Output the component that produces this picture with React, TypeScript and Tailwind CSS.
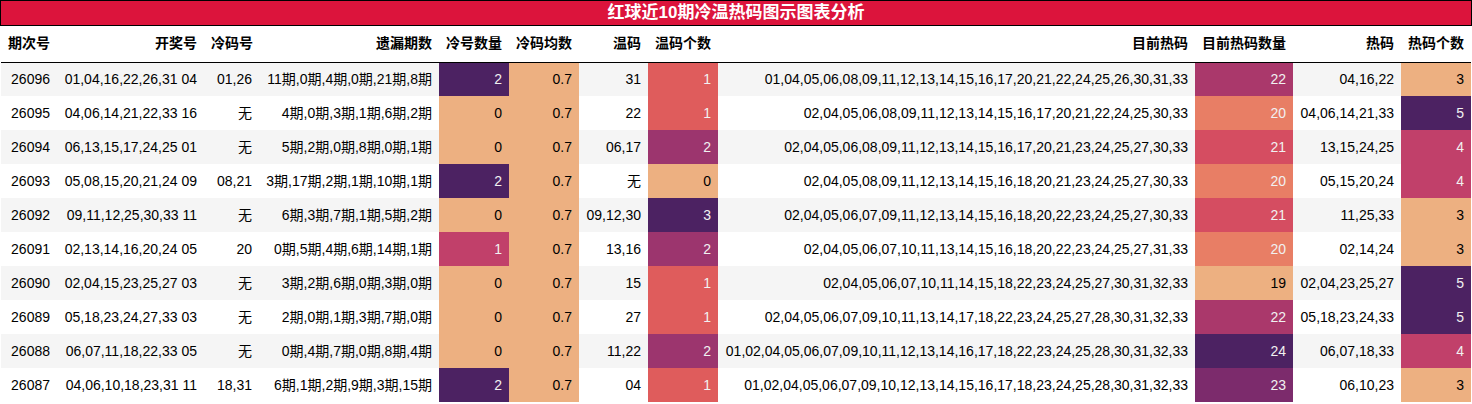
type Row = {
  issue: string;
  draw: string;
  cold: string;
  miss: string;
  coldCount: number;
  coldAvg: string;
  warm: string;
  warmCount: number;
  hotNow: string;
  hotNowCount: number;
  hot: string;
  hotCount: number;
};

const rows: Row[] = [
  { issue: '26096', draw: '01,04,16,22,26,31 04', cold: '01,26', miss: '11期,0期,4期,0期,21期,8期', coldCount: 2, coldAvg: '0.7', warm: '31', warmCount: 1, hotNow: '01,04,05,06,08,09,11,12,13,14,15,16,17,20,21,22,24,25,26,30,31,33', hotNowCount: 22, hot: '04,16,22', hotCount: 3 },
  { issue: '26095', draw: '04,06,14,21,22,33 16', cold: '无', miss: '4期,0期,3期,1期,6期,2期', coldCount: 0, coldAvg: '0.7', warm: '22', warmCount: 1, hotNow: '02,04,05,06,08,09,11,12,13,14,15,16,17,20,21,22,24,25,30,33', hotNowCount: 20, hot: '04,06,14,21,33', hotCount: 5 },
  { issue: '26094', draw: '06,13,15,17,24,25 01', cold: '无', miss: '5期,2期,0期,8期,0期,1期', coldCount: 0, coldAvg: '0.7', warm: '06,17', warmCount: 2, hotNow: '02,04,05,06,08,09,11,12,13,14,15,16,17,20,21,23,24,25,27,30,33', hotNowCount: 21, hot: '13,15,24,25', hotCount: 4 },
  { issue: '26093', draw: '05,08,15,20,21,24 09', cold: '08,21', miss: '3期,17期,2期,1期,10期,1期', coldCount: 2, coldAvg: '0.7', warm: '无', warmCount: 0, hotNow: '02,04,05,08,09,11,12,13,14,15,16,18,20,21,23,24,25,27,30,33', hotNowCount: 20, hot: '05,15,20,24', hotCount: 4 },
  { issue: '26092', draw: '09,11,12,25,30,33 11', cold: '无', miss: '6期,3期,7期,1期,5期,2期', coldCount: 0, coldAvg: '0.7', warm: '09,12,30', warmCount: 3, hotNow: '02,04,05,06,07,09,11,12,13,14,15,16,18,20,22,23,24,25,27,30,33', hotNowCount: 21, hot: '11,25,33', hotCount: 3 },
  { issue: '26091', draw: '02,13,14,16,20,24 05', cold: '20', miss: '0期,5期,4期,6期,14期,1期', coldCount: 1, coldAvg: '0.7', warm: '13,16', warmCount: 2, hotNow: '02,04,05,06,07,10,11,13,14,15,16,18,20,22,23,24,25,27,31,33', hotNowCount: 20, hot: '02,14,24', hotCount: 3 },
  { issue: '26090', draw: '02,04,15,23,25,27 03', cold: '无', miss: '3期,2期,6期,0期,3期,0期', coldCount: 0, coldAvg: '0.7', warm: '15', warmCount: 1, hotNow: '02,04,05,06,07,10,11,14,15,18,22,23,24,25,27,30,31,32,33', hotNowCount: 19, hot: '02,04,23,25,27', hotCount: 5 },
  { issue: '26089', draw: '05,18,23,24,27,33 03', cold: '无', miss: '2期,0期,1期,3期,7期,0期', coldCount: 0, coldAvg: '0.7', warm: '27', warmCount: 1, hotNow: '02,04,05,06,07,09,10,11,13,14,17,18,22,23,24,25,27,28,30,31,32,33', hotNowCount: 22, hot: '05,18,23,24,33', hotCount: 5 },
  { issue: '26088', draw: '06,07,11,18,22,33 05', cold: '无', miss: '0期,4期,7期,0期,8期,4期', coldCount: 0, coldAvg: '0.7', warm: '11,22', warmCount: 2, hotNow: '01,02,04,05,06,07,09,10,11,12,13,14,16,17,18,22,23,24,25,28,30,31,32,33', hotNowCount: 24, hot: '06,07,18,33', hotCount: 4 },
  { issue: '26087', draw: '04,06,10,18,23,31 11', cold: '18,31', miss: '6期,1期,2期,9期,3期,15期', coldCount: 2, coldAvg: '0.7', warm: '04', warmCount: 1, hotNow: '01,02,04,05,06,07,09,10,12,13,14,15,16,17,18,23,24,25,28,30,31,32,33', hotNowCount: 23, hot: '06,10,23', hotCount: 3 },
];

// gradient cells, one class per value (flare colour map)
const coldCountBg: Record<number, string> = {
  0: 'bg-[#edb081] text-black',
  1: 'bg-[#c1406a] text-[#f1f1f1]',
  2: 'bg-[#4c2262] text-[#f1f1f1]',
};
const warmCountBg: Record<number, string> = {
  0: 'bg-[#edb081] text-black',
  1: 'bg-[#df5c5c] text-[#f1f1f1]',
  2: 'bg-[#9c356e] text-[#f1f1f1]',
  3: 'bg-[#4c2262] text-[#f1f1f1]',
};
const hotNowBg: Record<number, string> = {
  19: 'bg-[#edb081] text-black',
  20: 'bg-[#e87e65] text-[#f1f1f1]',
  21: 'bg-[#d54d61] text-[#f1f1f1]',
  22: 'bg-[#aa386b] text-[#f1f1f1]',
  23: 'bg-[#7c2b6c] text-[#f1f1f1]',
  24: 'bg-[#4c2262] text-[#f1f1f1]',
};
const hotCountBg: Record<number, string> = {
  3: 'bg-[#edb081] text-black',
  4: 'bg-[#c1406a] text-[#f1f1f1]',
  5: 'bg-[#4c2262] text-[#f1f1f1]',
};

const headers = [
  { label: '期次号', w: 'w-[56px]' },
  { label: '开奖号', w: 'w-[147px]' },
  { label: '冷码号', w: 'w-[55px]' },
  { label: '遗漏期数', w: 'w-[180px]' },
  { label: '冷号数量', w: 'w-[70px]' },
  { label: '冷码均数', w: 'w-[70px]' },
  { label: '温码', w: 'w-[69px]' },
  { label: '温码个数', w: 'w-[70px]' },
  { label: '目前热码', w: 'w-[477px]' },
  { label: '目前热码数量', w: 'w-[98px]' },
  { label: '热码', w: 'w-[108px]' },
  { label: '热码个数', w: 'w-[70px]' },
];

export default function App() {
  return (
    <div className="w-[1472px] bg-white text-[14px] text-black [font-family:'Liberation_Sans','Noto_Sans_CJK_SC',sans-serif]">
      <div className="flex h-[26px] items-center justify-center border border-black bg-[#dc143c] text-[17px] font-bold text-white">
        红球近10期冷温热码图示图表分析
      </div>
      <table className="ml-px w-[1470px] table-fixed border-collapse">
        <thead>
          <tr className="h-[36px] border-b border-black">
            {headers.map((h) => (
              <th key={h.label} className={`whitespace-nowrap px-[7px] text-right font-bold ${h.w}`}>
                {h.label}
              </th>
            ))}
          </tr>
        </thead>
        <tbody>
          {rows.map((r, i) => (
            <tr key={r.issue} className={i % 2 === 0 ? 'h-[34px] bg-[#f5f5f5]' : 'h-[34px] bg-white'}>
              <td className="whitespace-nowrap px-[7px] text-right">{r.issue}</td>
              <td className="whitespace-nowrap px-[7px] text-right">{r.draw}</td>
              <td className="whitespace-nowrap px-[7px] text-right">{r.cold}</td>
              <td className="whitespace-nowrap px-[7px] text-right">{r.miss}</td>
              <td className={`whitespace-nowrap px-[7px] text-right ${coldCountBg[r.coldCount]}`}>{r.coldCount}</td>
              <td className="whitespace-nowrap bg-[#edb081] px-[7px] text-right">{r.coldAvg}</td>
              <td className="whitespace-nowrap px-[7px] text-right">{r.warm}</td>
              <td className={`whitespace-nowrap px-[7px] text-right ${warmCountBg[r.warmCount]}`}>{r.warmCount}</td>
              <td className="whitespace-nowrap px-[7px] text-right">{r.hotNow}</td>
              <td className={`whitespace-nowrap px-[7px] text-right ${hotNowBg[r.hotNowCount]}`}>{r.hotNowCount}</td>
              <td className="whitespace-nowrap px-[7px] text-right">{r.hot}</td>
              <td className={`whitespace-nowrap px-[7px] text-right ${hotCountBg[r.hotCount]}`}>{r.hotCount}</td>
            </tr>
          ))}
        </tbody>
      </table>
    </div>
  );
}
